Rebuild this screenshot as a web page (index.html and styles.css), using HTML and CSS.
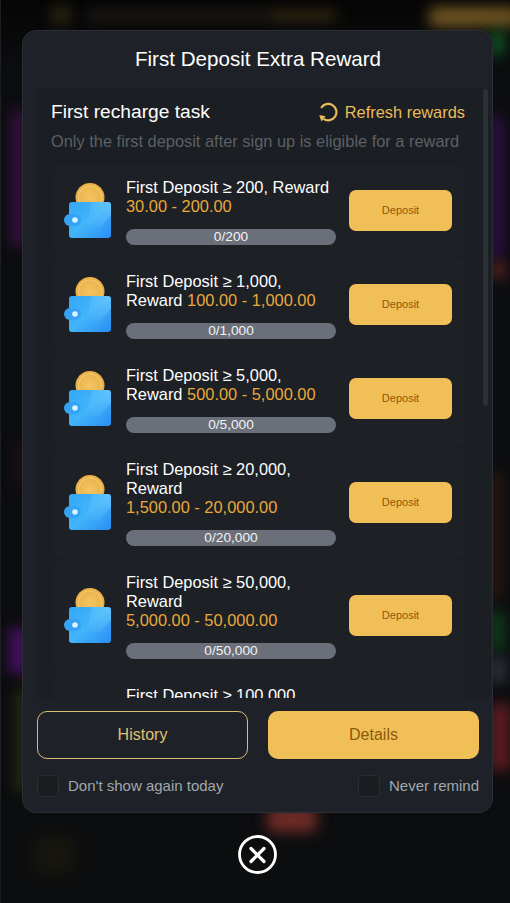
FILE: index.html
```html
<!DOCTYPE html>
<html lang="en">
<head>
<meta charset="utf-8">
<title>First Deposit Extra Reward</title>
<link rel="stylesheet" href="styles.css">
</head>
<body>
<svg width="0" height="0" class="defs">
  <defs>
    <linearGradient id="wg" x1="0" y1="0" x2="1" y2="1">
      <stop offset="0" stop-color="#35a8f6"/>
      <stop offset="0.5" stop-color="#42b4fa"/>
      <stop offset="1" stop-color="#2a8cf4"/>
    </linearGradient>
    <linearGradient id="wh" x1="1" y1="0" x2="0" y2="1">
      <stop offset="0" stop-color="#8fdcff" stop-opacity=".4"/>
      <stop offset="1" stop-color="#8fdcff" stop-opacity="0"/>
    </linearGradient>
    <radialGradient id="cg" cx="0.5" cy="0.5" r="0.55">
      <stop offset="0" stop-color="#f3c565"/>
      <stop offset="1" stop-color="#e8ad42"/>
    </radialGradient>
    <symbol id="wallet" viewBox="0 0 47 56">
      <circle cx="26" cy="14.5" r="14.5" fill="url(#cg)"/>
      <circle cx="26" cy="14.5" r="11.5" fill="none" stroke="#f8dc90" stroke-width="1.2" opacity=".55"/>
      <rect x="5" y="19" width="42" height="36" rx="3" fill="url(#wg)"/>
      <path d="M28 19h16a3 3 0 0 1 3 3v10L36 44H22z" fill="url(#wh)"/>
      <rect x="0" y="31" width="17" height="12" rx="6" fill="#35a2f4"/>
      <circle cx="11" cy="37" r="2.8" fill="#d8f3ff"/>
    </symbol>
  </defs>
</svg>
<div class="backdrop">
  <span class="blob b1"></span><span class="blob b2"></span><span class="blob b2b"></span><span class="blob b3"></span>
  <span class="blob b4"></span><span class="blob b4b"></span><span class="blob b5"></span><span class="blob b5b"></span>
  <span class="blob b6"></span><span class="blob b7"></span><span class="blob b7b"></span><span class="blob b8"></span>
  <span class="blob b8b"></span><span class="blob b8c"></span><span class="blob b8d"></span>
  <span class="blob b9"></span><span class="blob b10"></span>
</div>
<main class="stage">
  <section class="dialog">
    <h1 class="title">First Deposit Extra Reward</h1>
    <div class="scroller">
      <div class="list">
        <header class="head">
          <div class="head-row">
            <h2 class="task">First recharge task</h2>
            <div class="refresh">
              <svg class="refresh-icon" viewBox="0 0 20 20" width="20" height="20"><path d="M3.1 6A8.2 8.2 0 1 1 5.5 16.8" fill="none" stroke="#e9bb5b" stroke-width="2.2"/><path d="M1.2 13L7.6 14.2 3.4 19.4z" fill="#e9bb5b"/></svg>
              <span>Refresh rewards</span>
            </div>
          </div>
          <p class="note">Only the first deposit after sign up is eligible for a reward</p>
        </header>

        <article class="row">
          <svg class="wallet"><use href="#wallet"/></svg>
          <div class="info">
            <p class="desc">First Deposit ≥ 200, Reward <em>30.00 - 200.00</em></p>
            <div class="bar">0/200</div>
          </div>
          <button class="deposit">Deposit</button>
        </article>
        <article class="row">
          <svg class="wallet"><use href="#wallet"/></svg>
          <div class="info">
            <p class="desc">First Deposit ≥ 1,000, Reward <em>100.00 - 1,000.00</em></p>
            <div class="bar">0/1,000</div>
          </div>
          <button class="deposit">Deposit</button>
        </article>
        <article class="row">
          <svg class="wallet"><use href="#wallet"/></svg>
          <div class="info">
            <p class="desc">First Deposit ≥ 5,000, Reward <em>500.00 - 5,000.00</em></p>
            <div class="bar">0/5,000</div>
          </div>
          <button class="deposit">Deposit</button>
        </article>
        <article class="row">
          <svg class="wallet"><use href="#wallet"/></svg>
          <div class="info">
            <p class="desc">First Deposit ≥ 20,000, Reward <em>1,500.00 - 20,000.00</em></p>
            <div class="bar">0/20,000</div>
          </div>
          <button class="deposit">Deposit</button>
        </article>
        <article class="row">
          <svg class="wallet"><use href="#wallet"/></svg>
          <div class="info">
            <p class="desc">First Deposit ≥ 50,000, Reward <em>5,000.00 - 50,000.00</em></p>
            <div class="bar">0/50,000</div>
          </div>
          <button class="deposit">Deposit</button>
        </article>
        <article class="row">
          <svg class="wallet"><use href="#wallet"/></svg>
          <div class="info">
            <p class="desc">First Deposit ≥ 100,000, Reward <em>10,000.00 - 100,000.00</em></p>
            <div class="bar">0/100,000</div>
          </div>
          <button class="deposit">Deposit</button>
        </article>
      </div>
      <div class="scrollbar"></div>
    </div>
    <div class="actions">
      <button class="btn ghost">History</button>
      <button class="btn solid">Details</button>
    </div>
    <div class="checks">
      <label class="check"><span class="box"></span><span class="lbl">Don't show again today</span></label>
      <label class="check"><span class="box"></span><span class="lbl">Never remind</span></label>
    </div>
  </section>
  <button class="close" aria-label="Close">
    <svg viewBox="0 0 39 39" width="39" height="39"><circle cx="19.5" cy="19.5" r="18" fill="none" stroke="#fff" stroke-width="2.8"/><path d="M13 13.5l13 13M26 13.5l-13 13" stroke="#fff" stroke-width="3.2" stroke-linecap="round"/></svg>
  </button>
</main>
</body>
</html>
```
FILE: styles.css
```css
* { box-sizing: border-box; }
html, body { margin: 0; height: 100%; }
body {
  width: 510px; height: 903px; overflow: hidden; position: relative;
  background: linear-gradient(#050505, #0c0d0f 70px); font-family: "Liberation Sans", Arial, sans-serif; color: #fff;
}
.defs { position: absolute; }
.backdrop { position: absolute; inset: 0; overflow: hidden; border-left: 1px solid #1c1e21; }
.blob { position: absolute; filter: blur(7px); border-radius: 6px; }
.b1 { left: 50px; top: 6px; width: 20px; height: 18px; background: #2d2610; }
.b2 { left: 86px; top: 11px; width: 185px; height: 9px; background: #23201a; }
.b2b { left: 268px; top: 11px; width: 68px; height: 9px; background: #3b3013; }
.b3 { left: 428px; top: 7px; width: 90px; height: 20px; background: #6f5522; }
.b4 { left: 10px; top: 110px; width: 18px; height: 138px; background: #34103f; }
.b4b { left: 8px; top: 628px; width: 22px; height: 46px; background: #45105f; }
.b5 { left: 16px; top: 688px; width: 12px; height: 104px; background: #2d3210; }
.b5b { left: 16px; top: 440px; width: 10px; height: 50px; background: #24101a; }
.b6 { left: 488px; top: 30px; width: 16px; height: 26px; background: #0e5522; }
.b7 { left: 488px; top: 115px; width: 14px; height: 145px; background: #31104a; }
.b7b { left: 488px; top: 262px; width: 18px; height: 16px; background: #5a2321; }
.b8 { left: 488px; top: 470px; width: 12px; height: 130px; background: #2e1a10; }
.b8b { left: 488px; top: 610px; width: 16px; height: 42px; background: #0f3c1a; }
.b8c { left: 488px; top: 656px; width: 18px; height: 28px; background: #2b2f3a; }
.b8d { left: 488px; top: 703px; width: 22px; height: 68px; background: #5a1c20; }
.b9 { left: 266px; top: 806px; width: 50px; height: 26px; background: #6e2b26; }
.b10 { left: 32px; top: 835px; width: 42px; height: 40px; background: #16150e; }
.stage { position: relative; display: flex; flex-direction: column; align-items: center; padding: 30px 0 0 5px; }
.dialog {
  width: 471px; height: 783px; border-radius: 14px; padding: 0 13px 0 14px;
  background: #1e2228; border: 1px solid #2b2f35; display: flex; flex-direction: column;
}
.title { margin: 0; height: 57px; line-height: 56px; text-align: center; font-size: 20.6px; font-weight: 400; }
.scroller { position: relative; height: 610px; overflow: hidden; flex: none; margin-right: -12px; background: #1b1e22; }
.list { padding: 0 26px 0 14px; display: flex; flex-direction: column; gap: 2px; }
.head { padding: 12px 0; }
.head-row { display: flex; justify-content: space-between; align-items: center; height: 24px; }
.task { margin: 0; font-size: 19.2px; font-weight: 400; }
.refresh { display: flex; align-items: center; gap: 7px; font-size: 16.4px; color: #e9bb5b; }
.note { margin: 7px 0 0; font-size: 16.4px; line-height: 20px; color: #5c6067; white-space: nowrap; }
.row {
  display: flex; align-items: center; background: #1d2025; border-radius: 6px;
  margin-left: 3px; padding: 13px 14px 12px 10px;
}
.wallet { width: 47px; height: 56px; flex: none; margin: -1px 15px 0 0; }
.info { width: 210px; flex: none; }
.desc { margin: 0; font-size: 16.4px; line-height: 19px; }
.desc em { font-style: normal; color: #e8a93a; white-space: nowrap; }
.bar {
  margin-top: 13px; height: 16px; line-height: 16px; border-radius: 8px; background: #6a6f79;
  text-align: center; font-size: 13.7px; color: #f2f2f2;
}
.deposit {
  margin: -1px 0 1px 13px; padding: 0 0 1px; width: 103px; height: 41px; border: 0; border-radius: 7px; flex: none;
  background: #f0bf58; color: #8b5a0a; font: 11px "Liberation Sans", Arial, sans-serif;
}
.scrollbar { position: absolute; right: 3px; top: 1px; width: 5px; height: 317px; border-radius: 3px; background: #2b2f36; }
.actions { display: grid; grid-template-columns: 1fr 1fr; gap: 20px; margin-top: 13px; }
.btn { height: 48px; padding: 0; border-radius: 10px; font: 16px "Liberation Sans", Arial, sans-serif; }
.ghost { background: transparent; border: 1px solid #d9bd72; color: #e0c06f; }
.solid { background: #f0bf58; border: 0; color: #8b5a0a; }
.checks { display: flex; justify-content: space-between; margin-top: 16px; }
.check { display: flex; align-items: center; gap: 9px; font-size: 15px; color: #a3a6ab; }
.lbl { margin-bottom: 2px; }
.box { width: 22px; height: 22px; border-radius: 4px; border: 1px solid #2a2d32; background: #1a1c20; }
.close { margin-top: 22px; width: 39px; height: 39px; padding: 0; border: 0; background: none; display: block; }
```
